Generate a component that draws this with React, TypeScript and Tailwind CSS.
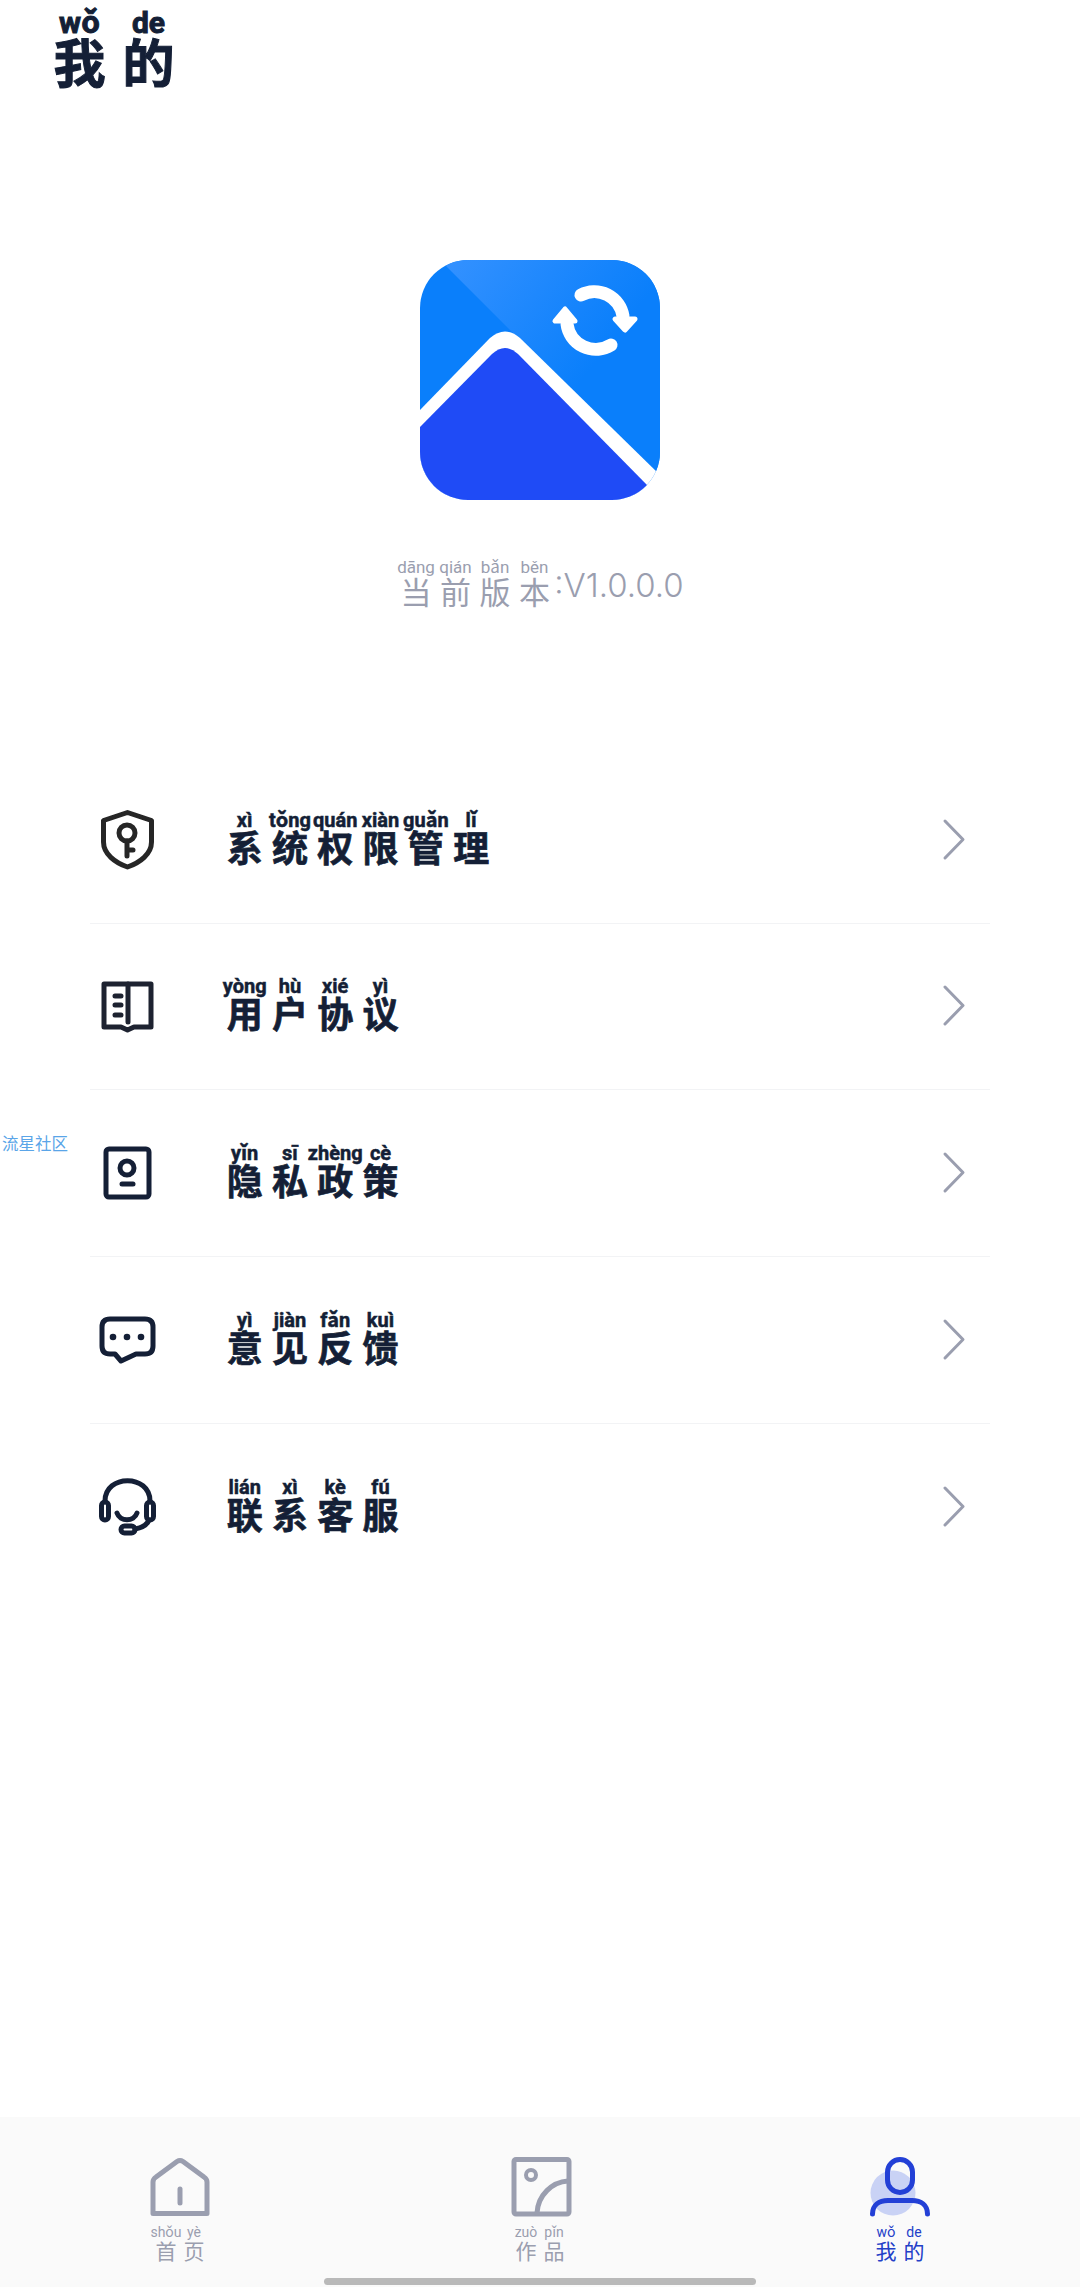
import React from "react";

const ink = "#141f36";

function Ruby({ pairs, cell, pyClass, hanClass }: { pairs: [string, string][]; cell: string; pyClass: string; hanClass: string }) {
  return (
    <div className="flex">
      {pairs.map(([han, py], i) => (
        <div key={i} className={`flex flex-col items-center ${cell}`}>
          <span className={`whitespace-nowrap font-['Roboto','Noto_Sans_CJK_SC',sans-serif] ${pyClass}`}>{py}</span>
          <span className={`whitespace-nowrap font-['Noto_Sans_CJK_SC',sans-serif] ${hanClass}`}>{han}</span>
        </div>
      ))}
    </div>
  );
}

function Logo() {
  return (
    <svg width="240" height="240" viewBox="0 0 240 240">
      <defs>
        <clipPath id="lc"><rect width="240" height="240" rx="48" /></clipPath>
        <linearGradient id="lg" x1="30" y1="0" x2="170" y2="110" gradientUnits="userSpaceOnUse">
          <stop offset="0" stopColor="#3391ff" />
          <stop offset="1" stopColor="#0a7ffb" />
        </linearGradient>
      </defs>
      <g clipPath="url(#lc)">
        <rect width="240" height="240" fill="#0a7ffb" />
        <path d="M20 0 L100 80 L240 216 V0 Z" fill="url(#lg)" />
        <path d="M0 150 L70 78 Q85 65 100 78 L245 220 V245 H0 Z" fill="#fff" />
        <path d="M0 167 L72 94 Q85 82 98 94 L228 226 L245 245 H0 Z" fill="#1f4bf6" />
      </g>
      <g fill="none" stroke="#fff" strokeWidth="13" strokeLinecap="round">
        <path d="M161 35 A29 29 0 0 1 203 56" />
        <path d="M191 85 A29 29 0 0 1 147 64" />
      </g>
      <g fill="#fff" stroke="#fff" strokeWidth="5" strokeLinejoin="round">
        <path d="M195 59 H215 L205 70 Z" />
        <path d="M135 61 H155 L145 49 Z" />
      </g>
    </svg>
  );
}

const iconBase = { width: 64, height: 64, viewBox: "0 0 64 64", fill: "none", strokeLinecap: "round" as const, strokeLinejoin: "round" as const };

function Shield() {
  return (
    <svg {...iconBase} stroke="#262626" strokeWidth="5">
      <path d="M32.5 4.500 L8.500 12.500 V34 C8.500 46 20 54.500 32.500 59 C45 54.500 56.500 46 56.500 34 V12.500 Z" />
      <circle cx="32" cy="25" r="8" />
      <path d="M32 33 V48 M32 42 H38" />
    </svg>
  );
}
function Book() {
  return (
    <svg {...iconBase} stroke="#1d2230" strokeWidth="5">
      <path d="M9 10 H56 V53 H39 L32.500 56 L26 53 H9 Z" />
      <path d="M33 10 V48" />
      <path d="M20 22 H26 M20 31 H26 M20 41 H26" />
    </svg>
  );
}
function Contact() {
  return (
    <svg {...iconBase} stroke={ink} strokeWidth="5">
      <rect x="11" y="8" width="43" height="48" rx="3" />
      <circle cx="32" cy="27" r="7" />
      <path d="M27 43 H38" />
    </svg>
  );
}
function Chat() {
  return (
    <svg {...iconBase} stroke={ink} strokeWidth="5">
      <path d="M15 11 H50 Q58 11 58 19 V38 Q58 46 50 46 H41 L26 53 L20 46 H15 Q7 46 7 38 V19 Q7 11 15 11 Z" />
      <circle cx="18" cy="29" r="3.300" fill={ink} stroke="none" />
      <circle cx="32" cy="29" r="3.300" fill={ink} stroke="none" />
      <circle cx="46" cy="29" r="3.300" fill={ink} stroke="none" />
    </svg>
  );
}
function Headset() {
  return (
    <svg {...iconBase} stroke={ink} strokeWidth="5">
      <path d="M10 26 C10 -1 55 -1 55 26" />
      <rect x="6.500" y="27" width="7" height="18" rx="3.500" />
      <rect x="51.500" y="27" width="7" height="18" rx="3.500" />
      <path d="M22 38 C25 47 39 47 42 38" />
      <rect x="26" y="51" width="14" height="7" rx="3.500" />
      <path d="M54 45 C52 50 46 53 40 54" />
    </svg>
  );
}
function Chevron() {
  return (
    <svg width="24" height="44" viewBox="0 0 24 44" fill="none" stroke="#9a9eaf" strokeWidth="3" strokeLinecap="round" strokeLinejoin="round">
      <path d="M3 3 L21 21.500 L3 40" />
    </svg>
  );
}

function TabHome() {
  return (
    <svg {...iconBase} stroke="#9a9eaf" strokeWidth="5">
      <path d="M5 58.500 V27 Q5 24 8 22 L29 6.500 Q32 4.500 35 6.500 L56 22 Q59 24 59 27 V58.500 Z" />
      <path d="M32 34 V48" />
    </svg>
  );
}
function TabImage() {
  return (
    <svg {...iconBase} stroke="#9a9eaf" strokeWidth="5">
      <rect x="6" y="4.500" width="55" height="54.500" rx="2" />
      <circle cx="23" cy="20" r="5" strokeWidth="4" />
      <path d="M29 58 C30 40 44 27 60 26" />
    </svg>
  );
}
function TabMe() {
  return (
    <svg {...iconBase} stroke="#2340d6" strokeWidth="5">
      <circle cx="25" cy="38" r="22.500" fill="#c9d2f5" stroke="none" />
      <rect x="19.500" y="4.500" width="25" height="33" rx="12.500" />
      <path d="M4.500 59 C4.500 50 11 45.500 20 45.500 H44 C53 45.500 59.500 50 59.500 59" />
    </svg>
  );
}

const rows: { icon: React.ReactNode; pairs: [string, string][] }[] = [
  { icon: <Shield />, pairs: [["系", "xì"], ["统", "tǒng"], ["权", "quán"], ["限", "xiàn"], ["管", "guǎn"], ["理", "lǐ"]] },
  { icon: <Book />, pairs: [["用", "yòng"], ["户", "hù"], ["协", "xié"], ["议", "yì"]] },
  { icon: <Contact />, pairs: [["隐", "yǐn"], ["私", "sī"], ["政", "zhèng"], ["策", "cè"]] },
  { icon: <Chat />, pairs: [["意", "yì"], ["见", "jiàn"], ["反", "fǎn"], ["馈", "kuì"]] },
  { icon: <Headset />, pairs: [["联", "lián"], ["系", "xì"], ["客", "kè"], ["服", "fú"]] },
];

const tabs: { icon: React.ReactNode; pairs: [string, string][]; color: string }[] = [
  { icon: <TabHome />, pairs: [["首", "shǒu"], ["页", "yè"]], color: "text-[#9a9eaf]" },
  { icon: <TabImage />, pairs: [["作", "zuò"], ["品", "pǐn"]], color: "text-[#9a9eaf]" },
  { icon: <TabMe />, pairs: [["我", "wǒ"], ["的", "de"]], color: "text-[#2340c8]" },
];

export default function App() {
  return (
    <div className="relative flex h-[2288px] w-[1080px] flex-col bg-white">
      <header className="pl-[45px] pt-[10px] text-[#141f36]">
        <Ruby
          pairs={[["我", "wǒ"], ["的", "de"]]}
          cell="w-[69px]"
          pyClass="text-[30px] leading-[26px] font-bold [-webkit-text-stroke:1px_currentColor]"
          hanClass="-mt-[2px] mb-[2px] text-[52px] leading-[54px] font-bold [-webkit-text-stroke:1px_currentColor]"
        />
      </header>

      <section className="mt-[170px] flex flex-col items-center">
        <Logo />
        <div className="mt-[58px] flex items-end text-[#9a9eaf]">
          <Ruby
            pairs={[["当", "dāng"], ["前", "qián"], ["版", "bǎn"], ["本", "běn"]]}
            cell="w-[39.500px]"
            pyClass="text-[17px] leading-[18px]"
            hanClass="-mt-[2px] mb-[2px] text-[31px] leading-[34px] font-normal"
          />
          <span className="mb-[3px] font-['Inter',sans-serif] text-[33px] leading-[44px] font-light">:V1.0.0.0</span>
        </div>
      </section>

      <ul className="ml-[90px] mt-[147px] w-[900px]">
        {rows.map((r, i) => (
          <li key={i} className={`flex h-[166.67px] items-center ${i < 4 ? "border-b border-[#f2f3f5]" : ""}`}>
            <div className="ml-[5px] mr-[63px] h-[64px] w-[64px]">{r.icon}</div>
            <div className="text-[#141f36]">
              <Ruby
                pairs={r.pairs}
                cell="w-[45.300px]"
                pyClass="-mt-[2px] mb-[2px] text-[20px] leading-[18px] font-bold [-webkit-text-stroke:0.500px_currentColor]"
                hanClass="-mt-[3px] mb-[3px] text-[36px] leading-[36px] font-bold [-webkit-text-stroke:0.700px_currentColor]"
              />
            </div>
            <div className="ml-auto mr-[24px] flex">
              <Chevron />
            </div>
          </li>
        ))}
      </ul>

      <nav className="relative mb-[1px] mt-auto grid h-[170px] grid-cols-3 bg-[#fafafa] pt-[38px]">
        {tabs.map((t, i) => (
          <div key={i} className={`flex flex-col items-center ${t.color}`}>
            <div className="h-[64px] w-[64px]">{t.icon}</div>
            <div className="mt-[6px]">
              <Ruby
                pairs={t.pairs}
                cell="w-[28px]"
                pyClass="text-[14px] leading-[14px]"
                hanClass="text-[21px] leading-[22px]"
              />
            </div>
          </div>
        ))}
        <div className="absolute bottom-[2px] left-[324px] h-[7px] w-[432px] rounded-full bg-[#b9b9b9]" />
      </nav>

      <div className="absolute left-[2px] top-[1134px] font-['Noto_Sans_CJK_SC',sans-serif] text-[16.500px] leading-[18px] text-[#5aa5e8]">
        流星社区
      </div>
    </div>
  );
}
